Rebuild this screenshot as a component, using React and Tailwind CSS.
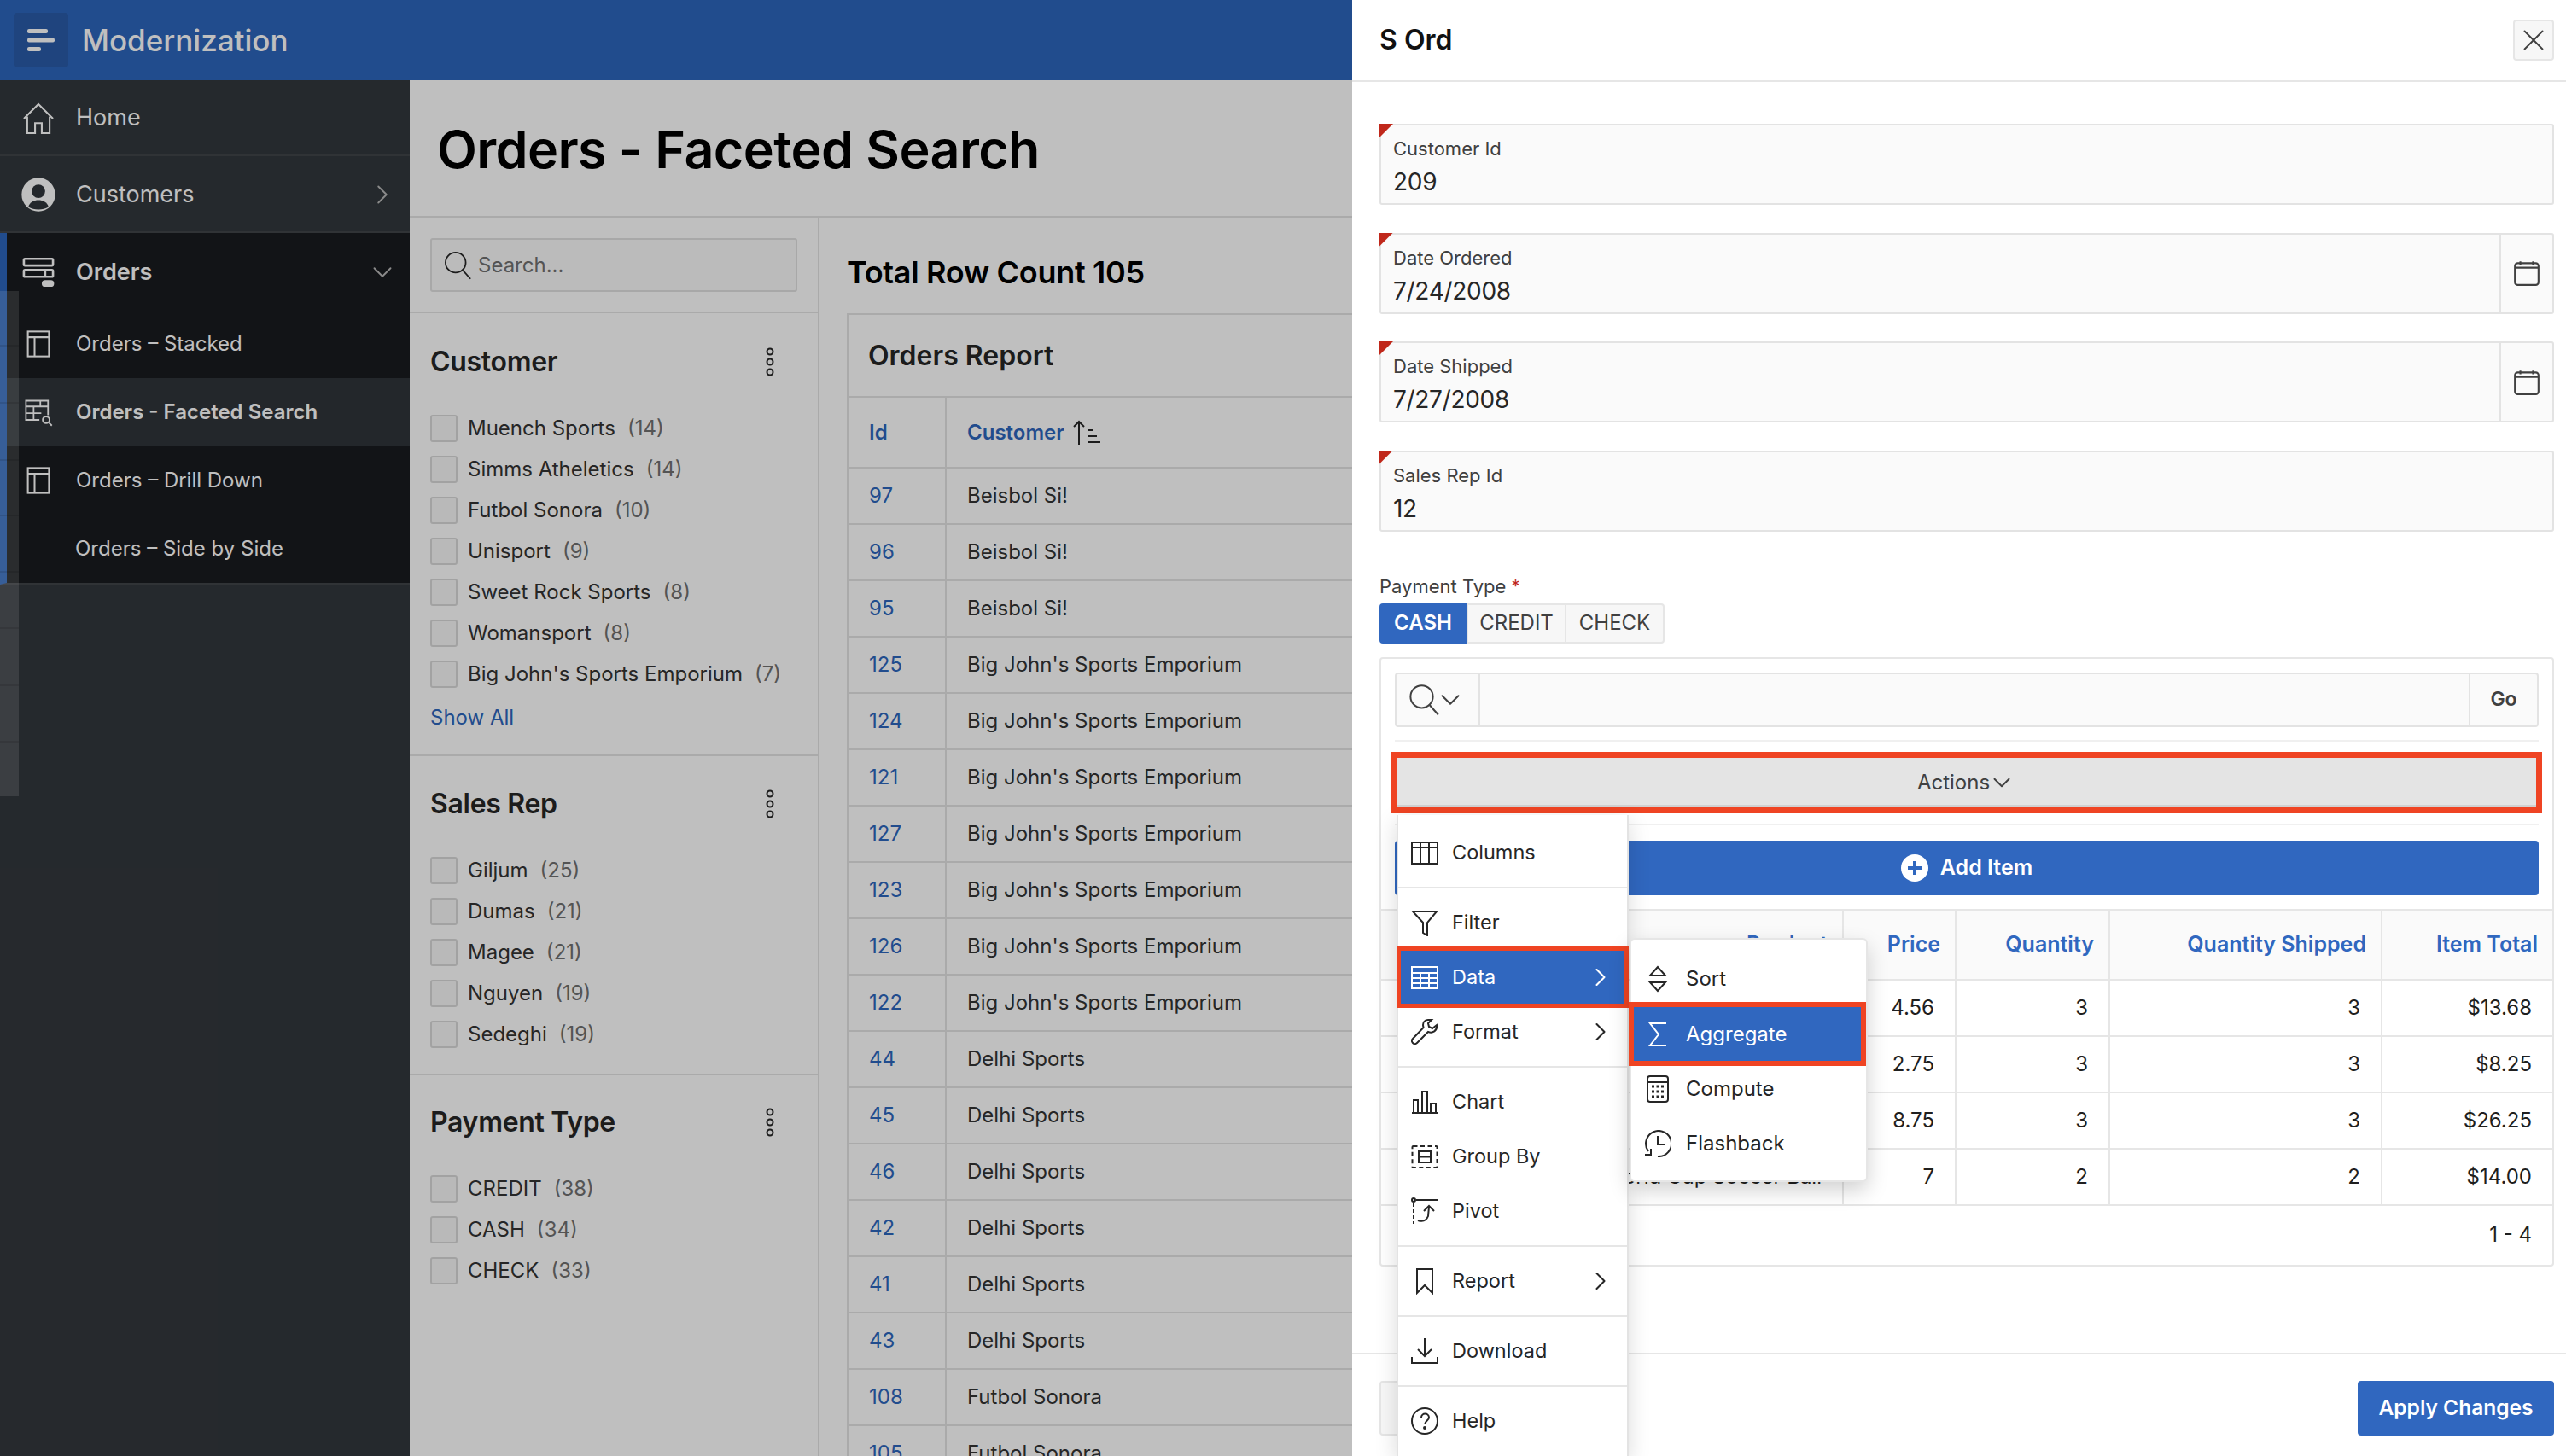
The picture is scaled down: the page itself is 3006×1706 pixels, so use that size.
import React from "react";
import { ChevronRight, ChevronDown, X } from "lucide-react";

const Svg = ({ size = 32, className = "", sw = 2, children }) => (
  <svg width={size} height={size} viewBox="0 0 32 32" fill="none" stroke="currentColor" strokeWidth={sw} className={"shrink-0 " + className}>
    {children}
  </svg>
);

const HomeIcon = () => (
  <Svg size={42} sw={1.6}>
    <path d="M3 16 16 3l13 13" />
    <path d="M6 14v15h7v-9h6v9h7V14" />
  </Svg>
);
const UserIcon = () => (
  <svg width="42" height="42" viewBox="0 0 32 32" className="shrink-0">
    <circle cx="16" cy="16" r="15" fill="currentColor" />
    <circle cx="16" cy="13" r="6" fill="#2f343a" />
    <path d="M7 27c1-4 5-6 9-6s8 2 9 6c-5 3-13 3-18 0z" fill="#2f343a" />
  </svg>
);
const OrdersIcon = () => (
  <Svg size={42} sw={2}>
    <rect x="3" y="4" width="26" height="6" rx="1" />
    <rect x="3" y="14" width="26" height="6" rx="1" />
    <path d="M22 14v6" />
    <rect x="20" y="24" width="9" height="4" rx="2" fill="currentColor" />
  </Svg>
);
const PanelIcon = () => (
  <Svg size={36} sw={1.8}>
    <rect x="5" y="3" width="22" height="26" />
    <path d="M5 9h22M12 9v20" />
  </Svg>
);
const TableSearchIcon = () => (
  <Svg size={36} sw={1.6}>
    <path d="M26 19V4H3v20h14M3 10h23M3 17h16M11 10v14M18 4v6" />
    <circle cx="24" cy="24" r="3.5" />
    <path d="m27 27 3 3" />
  </Svg>
);
const SearchIcon = ({ size = 36 }) => (
  <Svg size={size} sw={1.6}>
    <circle cx="14" cy="13" r="10.5" />
    <path d="m21.5 21 8 9" />
  </Svg>
);
const Kebab = () => (
  <svg width="12" height="36" viewBox="0 0 12 36" fill="none" stroke="currentColor" strokeWidth="2" className="shrink-0">
    <circle cx="6" cy="6" r="3.5" />
    <circle cx="6" cy="18" r="3.5" />
    <circle cx="6" cy="30" r="3.5" />
  </svg>
);
const CalendarIcon = () => (
  <Svg size={34} sw={2}>
    <rect x="3" y="5" width="26" height="24" rx="3" />
    <path d="M3 10h26M9 3v4M23 3v4" />
  </Svg>
);
const SortHeaderIcon = () => (
  <svg width="36" height="32" viewBox="0 0 36 32" fill="none" stroke="currentColor" strokeWidth="2" className="shrink-0">
    <path d="M9 30V3M3 9l6-6 6 6" />
    <path d="M20 13h5M20 20h10M20 27h14" />
  </svg>
);

const menuIcons = {
  Columns: (
    <Svg>
      <rect x="1" y="4" width="30" height="25" />
      <path d="M1 10h30M11 4v25M21 4v25" />
    </Svg>
  ),
  Filter: (
    <Svg>
      <path d="M2 3h28L19 16v15l-5-3V16z" />
    </Svg>
  ),
  Data: (
    <Svg>
      <rect x="1" y="4" width="30" height="25" />
      <path d="M1 11h30M1 17h30M1 23h30M11 11v18M21 11v18" />
    </Svg>
  ),
  Format: (
    <Svg>
      <path d="M20 2c-4 0-6 3-6 6 0 1 .3 2 .6 3L2 24c-2 2-1 4 0 5s3 2 5 0l13-13c5 2 11-1 10-8l-5 4-4-2-1-4 4-4z" />
    </Svg>
  ),
  Chart: (
    <Svg>
      <path d="M1 29h30M3 29V14h5v15M13 29V4h6v25M23 29V18h6v11" />
    </Svg>
  ),
  "Group By": (
    <Svg>
      <rect x="1.5" y="4" width="29" height="25" rx="1" strokeDasharray="5 3.5" />
      <rect x="9" y="10" width="14" height="13" />
      <path d="M9 16.5h14" />
    </Svg>
  ),
  Pivot: (
    <Svg>
      <path d="M6 3h25" />
      <circle cx="3" cy="3" r="2" />
      <path d="M3 7v24" strokeDasharray="4 3" />
      <path d="M8 27c6 2 10 0 12-5l1-11M15 16l6-6 6 6" />
    </Svg>
  ),
  Report: (
    <Svg>
      <path d="M7 2h18v28l-9-9-9 9z" />
    </Svg>
  ),
  Download: (
    <Svg>
      <path d="M16 1v21M8 14l8 8 8-8M1 23v7h30v-7" />
    </Svg>
  ),
  Help: (
    <svg width="32" height="32" viewBox="0 0 32 32" fill="none" stroke="currentColor" strokeWidth="2" className="shrink-0">
      <circle cx="16" cy="16" r="15" />
      <path d="M12 12c0-6 9-6 9 0 0 3-5 4-5 8" />
      <circle cx="16" cy="24" r="1" fill="currentColor" />
    </svg>
  ),
  Sort: (
    <Svg>
      <path d="M16 2 7 12h18zM16 30 7 20h18z" />
    </Svg>
  ),
  Aggregate: (
    <Svg sw={2}>
      <path d="M26 3H7l10 13L7 29h19" />
    </Svg>
  ),
  Compute: (
    <svg width="32" height="34" viewBox="0 0 32 34" fill="none" stroke="currentColor" strokeWidth="2" className="shrink-0">
      <rect x="4" y="2" width="24" height="30" rx="3" />
      <path d="M4 9h24" />
      <path d="M9 14h14M9 20h14M9 26h14" strokeWidth="3" strokeDasharray="3 2.5" />
    </svg>
  ),
  Flashback: (
    <Svg>
      <path d="M5 25A15 15 0 1 1 16 31" />
      <path d="M16 7v10h8M1 29h7v-7" />
    </Svg>
  ),
};

const customers = [
  ["Muench Sports", 14],
  ["Simms Atheletics", 14],
  ["Futbol Sonora", 10],
  ["Unisport", 9],
  ["Sweet Rock Sports", 8],
  ["Womansport", 8],
  ["Big John's Sports Emporium", 7],
];
const reps = [
  ["Giljum", 25],
  ["Dumas", 21],
  ["Magee", 21],
  ["Nguyen", 19],
  ["Sedeghi", 19],
];
const payments = [
  ["CREDIT", 38],
  ["CASH", 34],
  ["CHECK", 33],
];

const orders = [
  [97, "Beisbol Si!"],
  [96, "Beisbol Si!"],
  [95, "Beisbol Si!"],
  [125, "Big John's Sports Emporium"],
  [124, "Big John's Sports Emporium"],
  [121, "Big John's Sports Emporium"],
  [127, "Big John's Sports Emporium"],
  [123, "Big John's Sports Emporium"],
  [126, "Big John's Sports Emporium"],
  [122, "Big John's Sports Emporium"],
  [44, "Delhi Sports"],
  [45, "Delhi Sports"],
  [46, "Delhi Sports"],
  [42, "Delhi Sports"],
  [41, "Delhi Sports"],
  [43, "Delhi Sports"],
  [108, "Futbol Sonora"],
  [105, "Futbol Sonora"],
];

const items = [
  ["", "4.56", 3, 3, "$13.68"],
  ["", "2.75", 3, 3, "$8.25"],
  ["", "8.75", 3, 3, "$26.25"],
  ["World Cup Soccer Ball", "7", 2, 2, "$14.00"],
];

const stripLines = [404, 471, 538, 603, 669, 735, 802, 868];

const Facet = ({ title, rows, className, children }) => (
  <section className={"px-6 " + className}>
    <div className="flex items-center justify-between h-10 pr-[26px] text-[#262626]">
      <h3 className="text-[32px] font-semibold leading-10 tracking-[-0.3px]">{title}</h3>
      <Kebab />
    </div>
    <ul className="mt-[34px]">
      {rows.map(([name, count]) => (
        <li key={name} className="flex items-center h-12">
          <span className="w-8 h-8 rounded-[3px] border-2 border-[#d9d9d9] bg-[#f7f7f7] shrink-0" />
          <span className="ml-3 text-[24px] text-[#333]">{name}</span>
          <span className="ml-[14px] text-[24px] text-[#707070]">({count})</span>
        </li>
      ))}
    </ul>
    {children}
  </section>
);

const Field = ({ label, value, addon }) => (
  <div className="relative flex h-[95px] rounded-[3px] border-2 border-[#e3e3e3] bg-[#fafafa]">
    <span className="absolute -left-[2px] -top-[2px] w-4 h-4 bg-[#c0281b] [clip-path:polygon(0_0,100%_0,0_100%)]" />
    <div className="flex-1 pl-[14px] pt-[12px]">
      <div className="text-[22px] leading-[30px] text-[#404040]">{label}</div>
      <div className="text-[28px] leading-[40px] tracking-[-0.3px] text-[#262626] mt-[4px]">{value}</div>
    </div>
    {addon && (
      <div className="w-[62px] border-l-2 border-[#e3e3e3] flex items-center justify-center text-[#404040]">
        <CalendarIcon />
      </div>
    )}
  </div>
);

const MenuRow = ({ name, more, active }) => (
  <div
    className={
      active
        ? "relative -mx-[2px] -my-[4px] h-[72px] border-[5px] border-[#ef4423] bg-[#3067bf] text-white flex items-center pl-[12px] pr-[10px]"
        : "h-16 flex items-center pl-[15px] pr-[13px] text-[#262626]"
    }
  >
    {menuIcons[name]}
    <span className="ml-4 flex-1 text-[23.5px]">{name}</span>
    {more && <ChevronRight size={36} strokeWidth={1.4} />}
  </div>
);

const MenuGroup = ({ children, first }) => (
  <div className={"py-2 border-b-2 border-[#e6e6e6] " + (first ? "pt-3" : "")}>{children}</div>
);

const SubRow = ({ name, active }) => (
  <div
    className={
      active
        ? "relative -ml-[3px] h-[75px] -my-[5px] border-[6px] border-[#ef4423] bg-[#3067bf] text-white flex items-center"
        : "h-16 flex items-center text-[#262626]"
    }
  >
    <span className={"flex justify-center " + (active ? "w-[56px]" : "w-[62px]")}>{menuIcons[name]}</span>
    <span className={"text-[24px] " + (active ? "ml-[5px]" : "ml-[2px]")}>{name}</span>
  </div>
);

export default function App() {
  return (
    <div className="relative w-[3006px] h-[1706px] overflow-hidden bg-white font-['Inter','Liberation_Sans',sans-serif]">
      {/* page behind the drawer */}
      <div className="w-[1584px] h-full flex flex-col">
        <header className="h-[94px] shrink-0 bg-[#2d66bd] flex items-center pl-[16px]">
          <span className="w-[64px] h-[64px] rounded-[4px] bg-[#2a5ba8] flex items-center justify-center">
            <svg width="32" height="26" viewBox="0 0 32 26" fill="white">
              <rect x="0" y="0" width="24" height="5" rx="2" />
              <rect x="0" y="10.5" width="32" height="5" rx="2" />
              <rect x="0" y="21" width="16" height="5" rx="2" />
            </svg>
          </span>
          <span className="ml-4 text-[35px] font-medium text-white">Modernization</span>
        </header>

        <div className="flex-1 flex min-h-0">
          <aside className="w-[480px] shrink-0 bg-[#32373c] text-white">
            <div className="h-[89px] pl-6 pt-[2px] flex items-center gap-[23px] border-b-2 border-[#414549] text-[#ffffff]">
              <HomeIcon />
              <span className="text-[27px]">Home</span>
            </div>
            <div className="h-[90px] pl-6 pr-[13px] pt-[2px] flex items-center gap-[23px] border-b-2 border-[#414549]">
              <UserIcon />
              <span className="flex-1 text-[27px]">Customers</span>
              <ChevronRight size={38} strokeWidth={1.2} className="text-[#b8b8b8]" />
            </div>
            <div className="bg-[#191b1f] border-l-[8px] border-[#2d66bd] border-b-2 border-b-[#414549]">
              <div className="h-[90px] pl-4 pr-[13px] pt-[2px] flex items-center gap-[23px]">
                <OrdersIcon />
                <span className="flex-1 text-[27px] font-semibold">Orders</span>
                <ChevronDown size={38} strokeWidth={1.2} className="text-[#b8b8b8]" />
              </div>
              <div className="h-[80px] pl-[19px] flex items-center gap-[26px]">
                <PanelIcon />
                <span className="text-[24px]">Orders – Stacked</span>
              </div>
              <div className="h-[80px] pl-[19px] flex items-center gap-[26px] bg-[#2f343a]">
                <TableSearchIcon />
                <span className="text-[24px] font-semibold">Orders - Faceted Search</span>
              </div>
              <div className="h-[80px] pl-[19px] flex items-center gap-[26px]">
                <PanelIcon />
                <span className="text-[24px]">Orders – Drill Down</span>
              </div>
              <div className="h-[80px] pl-[80px] flex items-center">
                <span className="text-[24px]">Orders – Side by Side</span>
              </div>
            </div>
          </aside>

          <main className="flex-1 min-w-0 bg-white">
            <div className="h-[161px] pt-[5px] border-b-2 border-[#e3e3e3] pl-8 flex items-center">
              <h1 className="text-[61px] font-semibold tracking-[-0.6px] text-black whitespace-nowrap">Orders - Faceted Search</h1>
            </div>
            <div className="flex">
              <div className="w-[480px] shrink-0 border-r-2 border-[#e3e3e3]">
                <div className="h-[112px] px-6 pt-6 border-b-2 border-[#e3e3e3]">
                  <div className="h-[63px] rounded-[3px] border-2 border-[#e0e0e0] bg-[#fafafa] flex items-center pl-[12px] text-[#262626]">
                    <SearchIcon />
                    <span className="ml-[6px] text-[24px] text-[#707070]">Search...</span>
                  </div>
                </div>
                <Facet title="Customer" rows={customers} className="pt-[37px] pb-[28px] border-b-2 border-[#e3e3e3]">
                  <div className="mt-[12px] h-[30px] leading-[30px] text-[24px] text-[#2d66bd]">Show All</div>
                </Facet>
                <Facet title="Sales Rep" rows={reps} className="pt-[36px] pb-[22px] border-b-2 border-[#e3e3e3]" />
                <Facet title="Payment Type" rows={payments} className="pt-[35px]" />
              </div>
              <div className="flex-1 min-w-0 pl-[32px]">
                <h2 className="h-[112px] pt-[37px] text-[36px] font-semibold leading-[54px] tracking-[-0.3px] text-black whitespace-nowrap">Total Row Count 105</h2>
                <div className="border-l-2 border-t-2 border-[#e3e3e3] w-[700px]">
                  <div className="h-[97px] pl-[23px] flex items-center border-b-2 border-[#e3e3e3] text-[32px] font-semibold text-[#262626]">Orders Report</div>
                  <div className="flex h-[83px] border-b-2 border-[#e3e3e3] text-[24px] font-semibold text-[#2d66bd]">
                    <div className="w-[115px] pl-6 border-r-2 border-[#e3e3e3] flex items-center">Id</div>
                    <div className="pl-6 flex items-center gap-2">
                      Customer
                      <span className="text-[#262626]"><SortHeaderIcon /></span>
                    </div>
                  </div>
                  {orders.map(([id, name]) => (
                    <div key={id} className="flex h-[66px] border-b-2 border-[#e3e3e3] text-[24px]">
                      <div className="w-[115px] pl-6 border-r-2 border-[#e3e3e3] flex items-center text-[#2d66bd]">{id}</div>
                      <div className="pl-6 flex items-center text-[#333]">{name}</div>
                    </div>
                  ))}
                </div>
              </div>
            </div>
          </main>
        </div>
      </div>

      {/* modal dimming */}
      <div className="absolute left-0 top-0 w-[1584px] h-full bg-black/25" />

      {/* leftover strip at the sidebar edge */}
      <div className="absolute left-0 top-[341px] w-[22px] h-[592px] bg-white/10" />
      {stripLines.map((y) => (
        <div key={y} className="absolute left-0 w-[22px] h-[2px] bg-black/10" style={{ top: y }} />
      ))}

      {/* drawer */}
      <div className="absolute left-[1584px] top-0 right-0 bottom-0 bg-white flex flex-col">
        <div className="h-[96px] shrink-0 border-b-2 border-[#e6e6e6] pl-8 pr-[14px] flex items-center justify-between">
          <h2 className="text-[32px] font-semibold text-[#111]">S Ord</h2>
          <span className="w-[48px] h-[48px] rounded-[4px] border-2 border-[#e6e6e6] bg-[#f7f7f7] flex items-center justify-center text-[#404040]">
            <X size={42} strokeWidth={1.1} />
          </span>
        </div>

        <div className="flex-1 min-h-0 pl-8 pr-[14px] pt-[49px]">
          <div className="flex flex-col gap-[32.5px]">
            <Field label="Customer Id" value="209" />
            <Field label="Date Ordered" value="7/24/2008" addon />
            <Field label="Date Shipped" value="7/27/2008" addon />
            <Field label="Sales Rep Id" value="12" />
          </div>

          <div className="mt-[49px] h-[30px] leading-[30px] text-[22px] text-[#404040]">
            Payment Type <span className="text-[#c0281b] align-top text-[20px]">*</span>
          </div>
          <div className="mt-[5px] inline-flex h-[47px] rounded-[4px] text-[24px]">
            <span className="w-[102px] bg-[#3067bf] text-white font-semibold rounded-l-[4px] flex items-center justify-center">CASH</span>
            <span className="w-[117px] bg-[#f7f7f7] border-2 border-[#e6e6e6] text-[#404040] flex items-center justify-center">CREDIT</span>
            <span className="w-[115px] bg-[#f7f7f7] border-2 border-l-0 border-[#e6e6e6] rounded-r-[4px] text-[#404040] flex items-center justify-center">CHECK</span>
          </div>

          <div className="mt-[16px] h-[714px] rounded-[4px] border-2 border-[#e6e6e6] flex flex-col">
            <div className="px-4 pt-4">
              <div className="h-16 rounded-[4px] border-2 border-[#e3e3e3] bg-[#fafafa] flex">
                <div className="w-[98px] border-r-2 border-[#e3e3e3] flex items-center pl-[12px] text-[#404040]">
                  <SearchIcon size={40} />
                  <ChevronDown size={38} strokeWidth={1.3} className="-ml-[8px]" />
                </div>
                <div className="flex-1" />
                <div className="w-[80px] border-l-2 border-[#e3e3e3] flex items-center justify-center text-[23px] font-semibold text-[#404040]">Go</div>
              </div>
              <div className="mt-[15px] h-[2px] bg-[#f0f0f0]" />
              <div className="-mx-1 mt-3 h-[72px] border-[7px] border-[#ef4423] bg-[#e4e4e4] shadow-[inset_0_-3px_0_#d1d1d1] flex items-center justify-center text-[24px] text-[#404040]">
                Actions
                <ChevronDown size={34} strokeWidth={1.4} className="-ml-[3px]" />
              </div>
              <div className="mt-3 h-[2px] bg-[#f0f0f0]" />
              <div className="mt-[18px] h-16 rounded-[4px] bg-[#3067bf] text-white flex items-center justify-center gap-[14px] text-[25px] font-semibold">
                <svg width="32" height="32" viewBox="0 0 32 32" className="shrink-0">
                  <circle cx="16" cy="16" r="16" fill="white" />
                  <path d="M16 8v16M8 16h16" stroke="#3067bf" strokeWidth="4" />
                </svg>
                Add Item
              </div>
            </div>
            <table className="mt-4 w-full border-collapse table-fixed text-[24px]">
              <colgroup>
                <col className="w-[541px]" />
                <col className="w-[132px]" />
                <col className="w-[180px]" />
                <col className="w-[319px]" />
                <col />
              </colgroup>
              <thead>
                <tr className="h-[82px] bg-[#fafafa] text-[#3067bf] border-y-2 border-[#e6e6e6] text-[25px]">
                  {["Product", "Price", "Quantity", "Quantity Shipped", "Item Total"].map((h, i) => (
                    <th key={h} className={"text-right font-semibold pr-[17px] " + (i < 4 ? "border-r-2 border-[#e6e6e6]" : "")}>{h}</th>
                  ))}
                </tr>
              </thead>
              <tbody>
                {items.map((row, r) => (
                  <tr key={r} className="h-[66px] border-b-2 border-[#e6e6e6] text-[#1f1f1f]">
                    {row.map((c, i) => (
                      <td key={i} className={"text-right pr-6 whitespace-nowrap " + (i < 4 ? "border-r-2 border-[#e6e6e6]" : "")}>{c}</td>
                    ))}
                  </tr>
                ))}
              </tbody>
            </table>
            <div className="flex-1 flex items-center justify-end pr-6 text-[24px] text-[#1f1f1f]">1 - 4</div>
          </div>
        </div>

        <div className="h-[121px] shrink-0 border-t-2 border-[#e6e6e6] pl-8 pr-[14px] pt-[6px] flex items-center justify-between">
          <span className="w-[120px] h-16 rounded-[4px] border-2 border-[#e6e6e6] bg-[#f7f7f7]" />
          <span className="w-[230px] h-16 rounded-[4px] bg-[#3067bf] text-white text-[24.5px] font-semibold flex items-center justify-center">Apply Changes</span>
        </div>

        {/* actions menu */}
        <div className="absolute left-[52px] top-[955px] bottom-0 w-[272px] bg-white border-x-2 border-[#e3e3e3] shadow-[0_8px_24px_rgba(0,0,0,0.15)]">
          <MenuGroup first><MenuRow name="Columns" /></MenuGroup>
          <MenuGroup>
            <MenuRow name="Filter" />
            <MenuRow name="Data" more active />
            <MenuRow name="Format" more />
          </MenuGroup>
          <MenuGroup>
            <MenuRow name="Chart" />
            <MenuRow name="Group By" />
            <MenuRow name="Pivot" />
          </MenuGroup>
          <MenuGroup><MenuRow name="Report" more /></MenuGroup>
          <MenuGroup><MenuRow name="Download" /></MenuGroup>
          <div className="py-2"><MenuRow name="Help" /></div>
        </div>

        {/* data submenu */}
        <div className="absolute left-[325px] top-[1099px] w-[279px] h-[286px] pt-[14px] bg-white rounded-[6px] border-2 border-[#e6e6e6] shadow-[0_10px_24px_rgba(0,0,0,0.18)]">
          <SubRow name="Sort" />
          <SubRow name="Aggregate" active />
          <SubRow name="Compute" />
          <SubRow name="Flashback" />
        </div>
      </div>
    </div>
  );
}
